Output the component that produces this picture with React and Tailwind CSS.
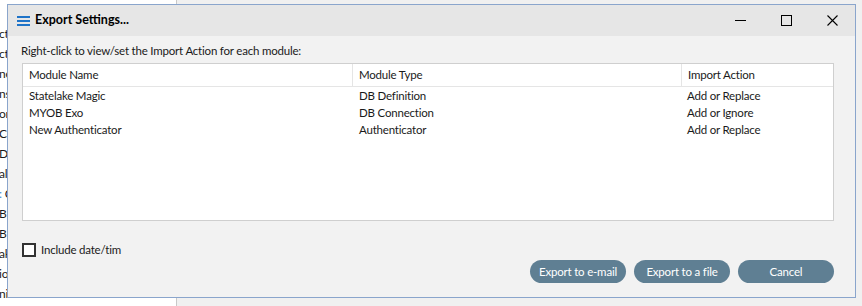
const bgLines = ['ct', 'ct', 'ne', 'ns', 'or', 'Cre', 'De', 'al', ': C', 'B', 'B', 'ak', 'io', 'ni'];

const rows = [
  { name: 'Statelake Magic', type: 'DB Definition', action: 'Add or Replace' },
  { name: 'MYOB Exo', type: 'DB Connection', action: 'Add or Ignore' },
  { name: 'New Authenticator', type: 'Authenticator', action: 'Add or Replace' },
];

const App = () => {
  return (
    <div className="relative w-[862px] h-[306px] overflow-hidden flex text-[11.5px] tracking-[-0.2px] text-[#1a1a1a]" style={{ fontFamily: 'Lato, "Liberation Sans", sans-serif' }}>
      <div className="w-[177px] h-full bg-white border-r border-[#c8c8c8] pt-[24px] flex flex-col text-[12px]">
        {bgLines.map((t, i) => (
          <div key={i} className="h-[20px] leading-[20px] -ml-[1px] whitespace-nowrap">
            {t === ': C' ? <><span className="text-[#3b8fd6]">:</span> C</> : t}
          </div>
        ))}
      </div>
      <div className="flex-1 h-full bg-[#f0f0f0]" />

      <div className="absolute left-[7px] top-[4px] w-[849px] h-[294px] border border-[#8aa5cc] bg-[#f2f2f2] flex flex-col">
        <div className="h-[31px] bg-[#e6e6e6] flex items-center shrink-0">
          <svg width="13" height="10" viewBox="0 0 13 10" className="ml-[9px]">
            <rect x="0" y="0" width="13" height="2" fill="#1e73c8" />
            <rect x="0" y="4" width="13" height="2" fill="#1e73c8" />
            <rect x="0" y="8" width="13" height="2" fill="#1e73c8" />
          </svg>
          <span className="ml-[5px] font-bold text-[12.5px] tracking-normal text-black">Export Settings...</span>
          <div className="ml-auto flex items-center">
            <div className="w-[46px] h-[31px] flex items-center justify-center">
              <svg width="11" height="11" viewBox="0 0 11 11"><line x1="0" y1="5.5" x2="11" y2="5.5" stroke="#000" strokeWidth="1" /></svg>
            </div>
            <div className="w-[46px] h-[31px] flex items-center justify-center">
              <svg width="11" height="11" viewBox="0 0 11 11"><rect x="0.5" y="0.5" width="10" height="10" fill="none" stroke="#000" strokeWidth="1" /></svg>
            </div>
            <div className="w-[46px] h-[31px] flex items-center justify-center">
              <svg width="11" height="11" viewBox="0 0 11 11"><path d="M0.5 0.5L10.5 10.5M10.5 0.5L0.5 10.5" stroke="#000" strokeWidth="1.1" /></svg>
            </div>
          </div>
        </div>

        <div className="px-[13px] pt-[5px] flex flex-col flex-1">
          <div className="leading-[20px]">Right-click to view/set the Import Action for each module:</div>
          <div className="mt-[2px] ml-[1px] w-[812px] h-[158px] bg-white border border-[#cfcfcf]">
            <div className="flex h-[23px] border-b border-[#e5e5e5] items-center">
              <div className="w-[330px] pl-[6px] border-r border-[#e5e5e5] h-full flex items-center">Module Name</div>
              <div className="w-[329px] pl-[6px] border-r border-[#e5e5e5] h-full flex items-center">Module Type</div>
              <div className="flex-1 pl-[6px] h-full flex items-center">Import Action</div>
            </div>
            <div>
              {rows.map((r) => (
                <div key={r.name} className="flex h-[17px] items-center">
                  <div className="w-[330px] pl-[6px]">{r.name}</div>
                  <div className="w-[329px] pl-[6px]">{r.type}</div>
                  <div className="flex-1 pl-[5px]">{r.action}</div>
                </div>
              ))}
            </div>
          </div>

          <div className="mt-[20px] ml-[1px] flex items-center">
            <div className="w-[14px] h-[14px] border-2 border-[#333] bg-white" />
            <span className="ml-[5px]">Include date/tim</span>
          </div>

          <div className="mt-[2px] flex justify-end gap-[8px] pr-[8px]">
            <button className="w-[96px] h-[23px] rounded-full bg-[#5f7f93] text-white">Export to e-mail</button>
            <button className="w-[96px] h-[23px] rounded-full bg-[#5f7f93] text-white">Export to a file</button>
            <button className="w-[96px] h-[23px] rounded-full bg-[#5f7f93] text-white">Cancel</button>
          </div>
        </div>
      </div>
    </div>
  );
};

export default App;
